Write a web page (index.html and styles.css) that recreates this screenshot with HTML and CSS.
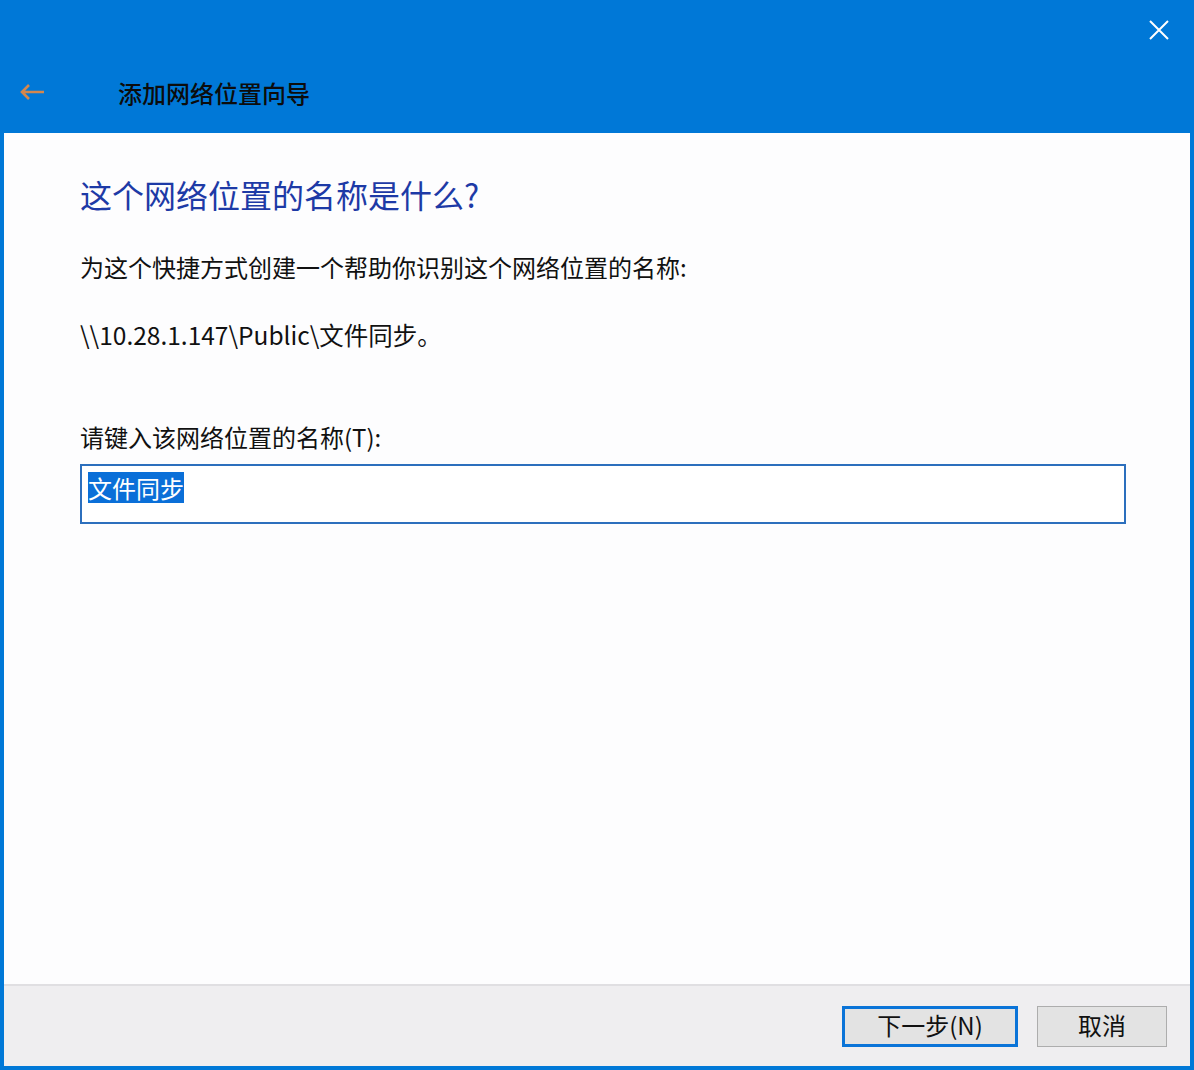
FILE: index.html
```html
<!DOCTYPE html>
<html lang="zh-CN">
<head>
    <meta charset="UTF-8">
    <title>添加网络位置向导</title>
    <link rel="stylesheet" href="styles.css">
</head>
<body>
    <div class="window">
        <header class="titlebar">
            <div class="caption-row">
                <button class="close-btn" aria-label="关闭">
                    <svg width="22" height="22" viewBox="0 0 22 22">
                        <path d="M2 2 L20 20 M20 2 L2 20" stroke="#ffffff" stroke-width="2" fill="none"/>
                    </svg>
                </button>
            </div>
            <div class="nav-row">
                <span class="back-btn">
                    <svg width="28" height="22" viewBox="0 0 28 22">
                        <path d="M26 11 H4 M11 4 L4 11 L11 18" stroke="#d4874e" stroke-width="2.6" fill="none"/>
                    </svg>
                </span>
                <span class="wizard-title">添加网络位置向导</span>
            </div>
        </header>

        <div class="frame">
            <main class="content">
                <h1 class="main-instruction">这个网络位置的名称是什么?</h1>
                <p class="desc">为这个快捷方式创建一个帮助你识别这个网络位置的名称:</p>
                <p class="path">\\10.28.1.147\Public\文件同步。</p>

                <div class="field">
                    <label class="field-label" for="name">请键入该网络位置的名称(T):</label>
                    <div class="name-box" id="name">
                        <span class="selected">文件同步</span>
                    </div>
                </div>
            </main>

            <footer class="footer">
                <button class="btn btn-default">下一步(N)</button>
                <button class="btn">取消</button>
            </footer>
        </div>
    </div>
</body>
</html>
```

FILE: styles.css
```css
* {
    margin: 0;
    padding: 0;
    box-sizing: border-box;
    font-family: "Noto Sans CJK SC", "Noto Sans", sans-serif;
}

body {
    background-color: #0078d7;
}

.window {
    display: flex;
    flex-direction: column;
    width: 1194px;
    height: 1070px;
}

/* Title bar */
.titlebar {
    height: 133px;
    background-color: #0078d7;
    display: flex;
    flex-direction: column;
}

.caption-row {
    display: flex;
    justify-content: flex-end;
    height: 60px;
}

.close-btn {
    background: none;
    border: none;
    width: 68px;
    height: 60px;
    display: flex;
    align-items: center;
    justify-content: center;
    padding-right: 2px;
}

.nav-row {
    display: flex;
    align-items: center;
    height: 64px;
}

.back-btn {
    display: flex;
    align-items: center;
    width: 118px;
    padding-left: 18px;
}

.wizard-title {
    font-size: 24px;
    font-weight: 500;
    color: #0c0c0c;
}

/* Body frame */
.frame {
    flex: 1;
    display: flex;
    flex-direction: column;
    border: 4px solid #0078d7;
    border-top: none;
}

.content {
    flex: 1;
    background-color: #fdfdfe;
    padding: 38px 64px 0 76px;
}

.main-instruction {
    font-size: 32px;
    font-weight: normal;
    color: #1d3aa6;
    line-height: 46px;
    margin-bottom: 34px;
}

.desc,
.path,
.field-label {
    font-size: 24px;
    color: #111111;
    line-height: 32px;
}

.path {
    margin-top: 36px;
    font-size: 24.5px;
}

.field {
    margin-top: 70px;
}

.field-label {
    display: block;
    margin-bottom: 11px;
}

.name-box {
    height: 60px;
    border: 2px solid #2c6fbd;
    background-color: #ffffff;
    padding: 6px 0 0 6px;
}

.selected {
    display: inline-block;
    background-color: #0a6fd8;
    color: #ffffff;
    font-size: 24px;
    line-height: 31px;
}

/* Footer */
.footer {
    height: 82px;
    background-color: #efeef0;
    border-top: 2px solid #e0dfe2;
    display: flex;
    justify-content: flex-end;
    align-items: center;
    gap: 19px;
    padding-right: 23px;
}

.btn {
    width: 130px;
    height: 41px;
    background-color: #e3e3e3;
    border: 1px solid #adadad;
    font-size: 24px;
    line-height: 32px;
    padding-bottom: 3px;
    color: #111111;
}

.btn-default {
    width: 176px;
    border: 3px solid #0a74d8;
}
```
